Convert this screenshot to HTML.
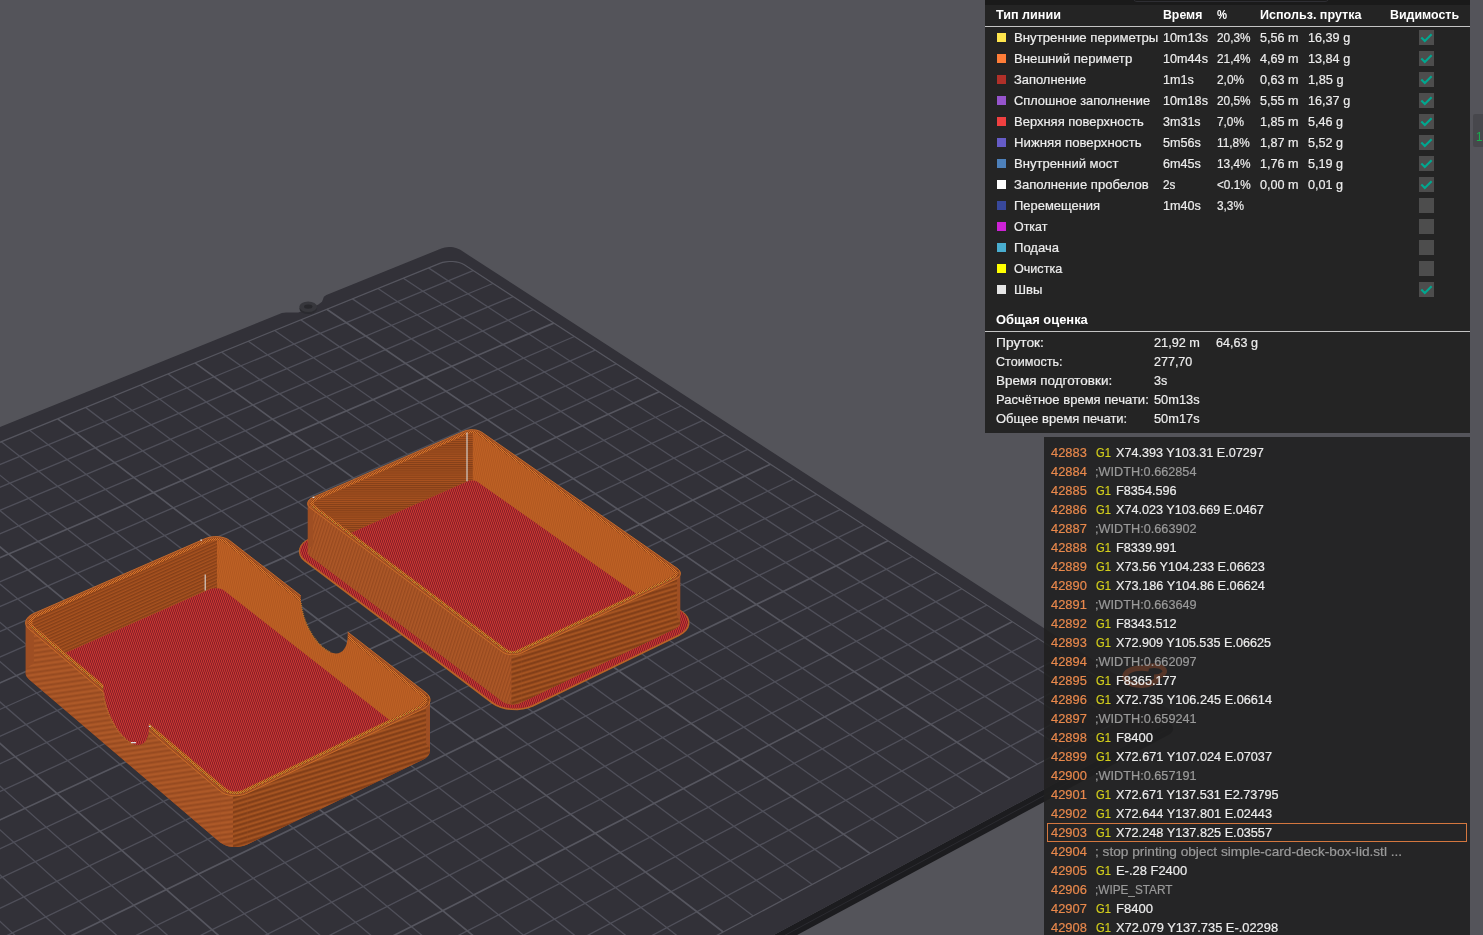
<!DOCTYPE html>
<html lang="ru"><head><meta charset="utf-8"><title>G-code preview</title>
<style>
html,body{margin:0;padding:0}
body{width:1483px;height:935px;overflow:hidden;position:relative;background:#54545a;font-family:"Liberation Sans",sans-serif}

.lg{position:absolute;left:985px;top:0;width:485px;height:433px;background:#242424;color:#ededed;font-size:13px;line-height:15px;white-space:nowrap}
.lg .tb{position:absolute;left:0;top:0;width:485px;height:5px;background:#1a1a1a}
.lg .tb i{position:absolute;left:147px;top:-10px;width:198px;height:12px;border:1px solid #2e2e33;border-radius:5px;box-sizing:border-box}
.lg b,.lg span{position:absolute;display:block;transform-origin:0 50%}
.lg span{-webkit-text-stroke:0.2px #ededed}
.lg b{font-weight:bold;color:#fff}
.lg .sep{position:absolute;left:0;width:485px;height:1px;background:#c4c4c4}
.lg .sw{position:absolute;left:11.8px;width:9.3px;height:9px}
.lg .cb{position:absolute;left:434px;width:15px;height:15px;background:#4d4d4d}
.lg .cb svg{position:absolute;left:0;top:0}
.gc{position:absolute;left:1044px;top:437px;width:426px;height:498px;background:rgba(32,32,32,0.9);color:#ececec;font-size:13px;line-height:15px;white-space:nowrap;overflow:hidden}
.gc span{position:absolute;display:block;transform-origin:0 50%;-webkit-text-stroke:0.2px currentColor}
.gc .n{color:#e8884c}
.gc .g{color:#d3cf1c}
.gc .c{color:#9a9a9a}
.gc .hl{position:absolute;left:3px;top:386px;width:418px;height:17px;border:1px solid #d4773f}
.sl{position:absolute;left:1473px;top:114px;width:12px;height:32.5px;background:#47474c;border-radius:2px}
.sl span{position:absolute;left:3.4px;top:17.4px;font-size:12.5px;line-height:12px;color:#17b34f;transform:scaleX(0.93);transform-origin:0 50%}

</style></head><body>
<svg width="1483" height="935" viewBox="0 0 1483 935" style="position:absolute;left:0;top:0;display:block">
<defs>
<pattern id="sAo" width="3" height="6" patternUnits="userSpaceOnUse" patternTransform="rotate(18)"><rect width="3" height="6" fill="#ae5827"/><rect width="1.4" height="6" fill="#984a20"/></pattern>
<pattern id="sAo1" width="10" height="4.8" patternUnits="userSpaceOnUse" patternTransform="rotate(-8)"><rect width="10" height="4.8" fill="#a45225"/><rect width="10" height="1.5" y="0.3" fill="#b05a28"/><rect width="10" height="1.5" y="2.7" fill="#964a20"/></pattern>
<pattern id="sBi1" width="8" height="3" patternUnits="userSpaceOnUse" patternTransform="rotate(-24)"><rect width="8" height="3" fill="#a9521f"/><rect width="8" height="1.5" fill="#843f19"/></pattern>
<pattern id="sAi" width="2" height="4" patternUnits="userSpaceOnUse" patternTransform="rotate(12)"><rect width="2" height="4" fill="#bf6125"/><rect width="1" height="4" fill="#b15820"/></pattern>
<pattern id="sBo" width="10" height="4.6" patternUnits="userSpaceOnUse" patternTransform="rotate(-17)"><rect width="10" height="4.6" fill="#93481d"/><rect width="10" height="1.5" y="0.3" fill="#a85521"/><rect width="10" height="1.5" y="2.6" fill="#7f3d17"/></pattern>
<pattern id="sBi" width="8" height="2.1" patternUnits="userSpaceOnUse"><rect width="8" height="2.1" fill="#a9521f"/><rect width="8" height="1.05" fill="#833f19"/></pattern>
<pattern id="sR" width="2" height="6" patternUnits="userSpaceOnUse"><rect width="2" height="6" fill="#a72b2d"/><rect width="1" height="2.4" fill="#8a2325"/><rect x="1" width="1" height="2.4" fill="#c63334"/><rect y="3" width="1" height="2.4" fill="#c63334"/><rect x="1" y="3" width="1" height="2.4" fill="#8a2325"/></pattern>
<pattern id="sRim" width="2" height="2" patternUnits="userSpaceOnUse"><rect width="2" height="2" fill="#dc7529"/><rect width="1" height="1" fill="#8a441b"/><rect x="1" y="1" width="1" height="1" fill="#9a4e1e"/></pattern>
</defs>
<path d="M1168.3 708.8 L1170 710 L1171.3 711.3 L1172.3 712.8 L1172.9 714.3 L1173.2 715.7 L1173.1 717.2 L1172.5 718.6 L1171.6 719.9 L1170.4 721.1 L1168.8 722.1 L241.2 1222 L238.7 1223.1 L236.1 1224 L233.3 1224.5 L230.4 1224.8 L227.6 1224.7 L224.8 1224.3 L222.1 1223.6 L219.7 1222.6 L217.6 1221.4 L215.7 1219.9 L-423.2 608.1 L-424.2 606.9 L-424.8 605.7 L-425.1 604.4 L-424.9 603 L-424.4 601.6 L-423.5 600.3 L-422.3 599 L-420.8 597.8 L-419 596.7 L-417 595.8 L-417 608.4 L-419 609.3 L-420.8 610.4 L-422.3 611.6 L-423.5 612.9 L-424.4 614.2 L-424.9 615.6 L-425.1 617 L-424.8 618.3 L-424.2 619.5 L-423.2 620.7 L215.7 1232.5 L217.6 1234 L219.7 1235.2 L222.1 1236.2 L224.8 1236.9 L227.6 1237.3 L230.4 1237.4 L233.3 1237.1 L236.1 1236.6 L238.7 1235.7 L241.2 1234.6 L1168.8 734.7 L1170.4 733.7 L1171.6 732.5 L1172.5 731.2 L1173.1 729.8 L1173.2 728.3 L1172.9 726.9 L1172.3 725.4 L1171.3 723.9 L1170 722.6 L1168.3 721.4Z" fill="#1c1c1f"/>
<path d="M1168.8 728.4 L241.2 1228.3" stroke="#2b2b30" stroke-width="1" fill="none"/>
<path d="M441.3 248.5 L443 248 L444.9 247.5 L446.9 247.2 L449 247.1 L451 247.1 L453.1 247.3 L455 247.7 L456.8 248.2 L458.4 248.9 L459.9 249.6 L1168.3 708.8 L1170 710 L1171.3 711.3 L1172.3 712.8 L1172.9 714.3 L1173.2 715.7 L1173.1 717.2 L1172.5 718.6 L1171.6 719.9 L1170.4 721.1 L1168.8 722.1 L241.2 1222 L238.7 1223.1 L236.1 1224 L233.3 1224.5 L230.4 1224.8 L227.6 1224.7 L224.8 1224.3 L222.1 1223.6 L219.7 1222.6 L217.6 1221.4 L215.7 1219.9 L-423.2 608.1 L-424.2 606.9 L-424.8 605.7 L-425.1 604.4 L-424.9 603 L-424.4 601.6 L-423.5 600.3 L-422.3 599 L-420.8 597.8 L-419 596.7 L-417 595.8 L281.9 313 L286.2 312.6 L298.4 312.5 L318 304.7 L322 301.8 L323.9 296.7 L326.4 295Z" fill="#323138"/>
<path d="M473.1 270.6L-372.5 617.3M428.5 267.9L1117.6 721.4M492.9 283.5L-354.9 633.9M403.4 278.2L1091.1 735.5M513 296.6L-337.1 650.7M378 288.5L1064.3 749.8M533.2 309.7L-319 667.7M352.5 298.9L1037.4 764.2M574.4 336.5L-282.4 702.4M300.8 319.9L982.7 793.4M595.2 350.1L-263.7 720M274.7 330.5L954.9 808.3M616.3 363.9L-244.8 737.8M248.3 341.2L926.9 823.2M637.7 377.8L-225.7 755.9M221.7 352.1L898.6 838.3M681 406L-186.8 792.6M168 373.9L841.3 868.9M703 420.3L-167 811.3M140.7 385L812.2 884.5M725.3 434.8L-147 830.3M113.3 396.2L782.8 900.2M747.7 449.4L-126.7 849.5M85.6 407.4L753.2 916M793.5 479.2L-85.3 888.5M29.6 430.2L693 948.1M816.7 494.3L-64.2 908.5M1.3 441.7L662.4 964.4M840.2 509.6L-42.9 928.6M-27.3 453.4L631.6 980.9M863.9 525.1L-21.2 949M-56.1 465.1L600.4 997.5M912.3 556.6L22.8 990.7M-114.5 488.8L537.2 1031.3M936.8 572.6L45.3 1011.9M-144.1 500.9L505.1 1048.5M961.7 588.8L68 1033.4M-173.9 513L472.7 1065.8M986.8 605.1L91.1 1055.2M-204 525.2L439.9 1083.3M1037.9 638.4L138.1 1099.6M-264.9 550L373.4 1118.8M1063.9 655.4L162.1 1122.3M-295.7 562.5L339.6 1136.8M1090.2 672.5L186.4 1145.2M-326.8 575.2L305.4 1155.1M1116.9 689.8L211.1 1168.5M-358.2 588L270.9 1173.5" stroke="#4f4f59" stroke-width="1.35" fill="none"/>
<path d="M553.7 323.1L-300.8 685M326.8 309.3L1010.1 778.8M659.2 391.8L-206.4 774.1M195 362.9L870.1 853.5M770.5 464.2L-106.1 868.9M57.8 418.8L723.2 932M888 540.8L0.6 969.7M-85.2 476.9L569 1014.4M1012.2 621.7L114.5 1077.2M-234.3 537.5L406.8 1100.9" stroke="#56565f" stroke-width="1.7" fill="none"/>
<path d="M439.8 263.4 L442.7 262.4 L445.8 261.8 L449.2 261.5 L452.6 261.5 L456 261.9 L459.1 262.5 L461.9 263.5 L464.3 264.8 L1129 697.7 L1131.6 699.7 L1133.5 702 L1134.8 704.4 L1135.2 706.8 L1134.9 709.2 L1133.8 711.4 L1131.9 713.4 L1129.4 715.1 L255.3 1181.8 L251.3 1183.6 L246.9 1184.8 L242.3 1185.3 L237.7 1185.3 L233.2 1184.6 L229 1183.3 L225.4 1181.4 L222.3 1179.1 L-380.3 609.8 L-381.9 607.9 L-382.7 605.8 L-382.7 603.6 L-382 601.4 L-380.5 599.2 L-378.4 597.1 L-375.6 595.3 L-372.4 593.7Z" stroke="#56565f" stroke-width="1.2" fill="none"/>
<ellipse cx="308.2" cy="308.8" rx="8.8" ry="5.2" fill="#2b2b30"/>
<ellipse cx="308.2" cy="306.8" rx="8.8" ry="5.2" fill="#37373c"/>
<ellipse cx="308.2" cy="306.6" rx="4.2" ry="2.2" fill="#28282c"/>
<path d="M298.9 551.7 L299.2 548.6 L300.5 545.5 L302.9 542.6 L306.2 540 L310.2 537.8 L453.1 474.9 L457.6 473.3 L462.6 472.2 L467.9 471.7 L473.2 471.7 L478.5 472.4 L483.4 473.6 L487.9 475.3 L491.6 477.4 L682.4 611.2 L685.7 614 L688 617 L689.2 620.3 L689.4 623.6 L689.4 624.5 L688.4 627.8 L686.4 630.8 L683.3 633.6 L679.4 635.9 L533.4 706.4 L528.6 708.3 L523.2 709.5 L517.4 710.2 L511.6 710.1 L505.9 709.4 L500.5 708 L495.7 705.9 L491.6 703.4 L304.4 561.4 L301.5 558.7 L299.7 555.7 L298.9 552.6Z" fill="#b86226"/>
<path d="M453.8 475.4 L458.1 473.9 L462.9 472.8 L468 472.3 L473.1 472.4 L478.1 473 L482.9 474.1 L487.1 475.8 L490.7 477.8 L681.5 611.6 L684.6 614.3 L686.8 617.2 L688 620.4 L688.1 623.5 L687.2 626.7 L685.3 629.6 L682.3 632.2 L678.6 634.4 L532.6 704.9 L528 706.7 L522.8 707.9 L517.3 708.5 L511.7 708.4 L506.3 707.7 L501.1 706.4 L496.5 704.5 L492.7 702 L305.4 560 L302.6 557.5 L300.9 554.7 L300.1 551.7 L300.4 548.7 L301.7 545.7 L303.9 542.9 L307.1 540.5 L311 538.4Z" fill="url(#sR)"/>
<path d="M307.7 503.8 L307.8 502.4 L308.4 501 L309.5 499.6 L311 498.4 L312.9 497.4 L464.1 431.2 L466.2 430.5 L468.5 430 L471 429.7 L473.5 429.8 L475.9 430 L478.2 430.6 L480.2 431.4 L482 432.4 L677.1 568.3 L678.6 569.6 L679.7 571 L680.3 572.5 L680.3 574 L680.3 623.1 L679.9 624.6 L678.9 626.1 L677.5 627.3 L675.7 628.4 L521.4 702.6 L519.1 703.5 L516.6 704.1 L514 704.4 L511.3 704.4 L508.7 704 L506.2 703.4 L504 702.5 L502.1 701.3 L310.2 556.2 L308.9 555 L308 553.6 L307.7 552.2Z" fill="#9e4e23"/>
<path d="M312.9 497.4 L310.5 498.8 L308.7 500.5 L307.8 502.4 L307.7 504.3 L308.6 506.2 L310.2 507.8 L502.1 651.7 L502.1 701.3 L310.2 556.2 L308.6 554.6 L307.7 552.7 L307.8 550.7 L308.7 548.8 L310.5 547.1 L312.9 545.8Z" fill="url(#sAo)"/>
<path d="M677.1 568.3 L679 570 L680.1 572 L680.3 574 L679.6 576 L678.1 577.8 L675.7 579.3 L521.4 653 L521.4 702.6 L675.7 628.4 L678.1 626.9 L679.6 625.1 L680.3 623.1 L680.1 621.1 L679 619.1 L677.1 617.4Z" fill="url(#sBo)"/>
<path d="M521.4 653 L518.3 654.2 L514.9 654.7 L511.3 654.8 L511.3 704.4 L514.9 704.3 L518.3 703.7 L521.4 702.6Z" fill="url(#sBo)"/>
<path d="M511.3 654.8 L507.8 654.2 L504.7 653.2 L502.1 651.7 L502.1 701.3 L504.7 702.8 L507.8 703.8 L511.3 704.4Z" fill="url(#sAo)"/>
<clipPath id="c_b2"><path d="M467.7 433.8 L468.9 433.4 L470.1 433.1 L471.4 432.9 L472.8 433 L474.1 433.1 L475.3 433.4 L476.4 433.8 L477.4 434.4 L672.5 570.5 L673.3 571.2 L673.9 572 L674.2 572.8 L674.2 573.6 L674 574.4 L673.4 575.2 L672.7 575.9 L671.7 576.4 L517.4 650.1 L516.2 650.6 L514.9 650.9 L513.4 651 L512 651 L510.5 650.8 L509.2 650.5 L508 650 L507 649.4 L315 505.7 L314.3 505.1 L313.9 504.3 L313.6 503.6 L313.7 502.8 L314.1 502 L314.6 501.3 L315.5 500.6 L316.5 500.1Z"/></clipPath>
<g clip-path="url(#c_b2)">
<path d="M467.7 433.8 L468.9 433.4 L470.1 433.1 L471.4 432.9 L472.8 433 L474.1 433.1 L475.3 433.4 L476.4 433.8 L477.4 434.4 L672.5 570.5 L673.3 571.2 L673.9 572 L674.2 572.8 L674.2 573.6 L674 574.4 L673.4 575.2 L672.7 575.9 L671.7 576.4 L517.4 650.1 L516.2 650.6 L514.9 650.9 L513.4 651 L512 651 L510.5 650.8 L509.2 650.5 L508 650 L507 649.4 L315 505.7 L314.3 505.1 L313.9 504.3 L313.6 503.6 L313.7 502.8 L314.1 502 L314.6 501.3 L315.5 500.6 L316.5 500.1Z" fill="url(#sAi)"/>
<path d="M472.8 433 L467.7 433.8 L306 504.7 L306 552.8 L467.7 481.2 L472.8 480.4Z" fill="url(#sBi)"/>
<path d="M467.7 481.2 L468.9 480.8 L470.1 480.5 L471.4 480.4 L472.8 480.4 L474.1 480.6 L475.3 480.9 L476.4 481.3 L477.4 481.8 L672.5 619.3 L673.3 620 L673.9 620.8 L674.2 621.6 L674.2 622.4 L674 623.2 L673.4 624 L672.7 624.7 L671.7 625.3 L517.4 699.4 L516.2 699.8 L514.9 700.2 L513.4 700.3 L512 700.3 L510.5 700.1 L509.2 699.8 L508 699.3 L507 698.6 L315 553.8 L314.3 553.1 L313.9 552.4 L313.6 551.6 L313.7 550.8 L314.1 550.1 L314.6 549.3 L315.5 548.7 L316.5 548.1Z" fill="url(#sR)"/>
</g>
<path d="M465.6 432.3 L467.3 431.7 L469.2 431.3 L471.2 431.1 L473.2 431.1 L475.2 431.3 L477 431.8 L478.7 432.4 L480.1 433.2 L675.2 569.2 L676.4 570.3 L677.3 571.4 L677.8 572.6 L677.8 573.9 L677.4 575.1 L676.7 576.2 L675.5 577.2 L674.1 578.1 L519.7 651.8 L517.9 652.5 L515.9 653 L513.8 653.2 L511.6 653.2 L509.4 652.9 L507.4 652.4 L505.6 651.7 L504.1 650.7 L312.2 507 L311.1 506 L310.4 504.9 L310.1 503.7 L310.2 502.5 L310.7 501.4 L311.6 500.3 L312.9 499.4 L314.4 498.5Z M467.7 433.8 L468.9 433.4 L470.1 433.1 L471.4 432.9 L472.8 433 L474.1 433.1 L475.3 433.4 L476.4 433.8 L477.4 434.4 L672.5 570.5 L673.3 571.2 L673.9 572 L674.2 572.8 L674.2 573.6 L674 574.4 L673.4 575.2 L672.7 575.9 L671.7 576.4 L517.4 650.1 L516.2 650.6 L514.9 650.9 L513.4 651 L512 651 L510.5 650.8 L509.2 650.5 L508 650 L507 649.4 L315 505.7 L314.3 505.1 L313.9 504.3 L313.6 503.6 L313.7 502.8 L314.1 502 L314.6 501.3 L315.5 500.6 L316.5 500.1Z" fill="url(#sRim)" fill-rule="evenodd"/>
<path d="M464.1 431.2 L466.2 430.5 L468.5 430 L471 429.7 L473.5 429.8 L475.9 430 L478.2 430.6 L480.2 431.4 L482 432.4 L677.1 568.3 L678.6 569.6 L679.7 571 L680.3 572.5 L680.3 574 L679.9 575.5 L678.9 576.9 L677.5 578.2 L675.7 579.3 L521.4 653 L519.1 653.9 L516.6 654.5 L514 654.8 L511.3 654.8 L508.7 654.4 L506.2 653.8 L504 652.9 L502.1 651.7 L310.2 507.8 L308.9 506.6 L308 505.3 L307.7 503.8 L307.8 502.4 L308.4 501 L309.5 499.6 L311 498.4 L312.9 497.4Z" fill="none" stroke="#cf6f2a" stroke-width="0.9"/>
<path d="M313.1 506.6 L505 650.3 L506.9 651.4 L509.2 652.1 L511.7 652.5 L514.3 652.5 L516.8 652.1 L519 651.3 L673.3 577.6" fill="none" stroke="#a4902f" stroke-width="1.1" stroke-dasharray="1.2 2.2"/>
<mask id="m_b1" maskUnits="userSpaceOnUse" x="0" y="0" width="1483" height="935"><rect width="1483" height="935" fill="#fff"/><path d="M300.8 591.9 L300.8 598.9 L301 603.2 L301.6 607.7 L302.6 612.3 L303.9 617 L305.6 621.8 L307.6 626.4 L309.9 630.9 L312.4 635.2 L315.1 639.1 L318 642.7 L321 645.8 L324.1 648.5 L327.1 650.6 L330.2 652.2 L333.1 653.1 L335.8 653.4 L338.4 653.2 L340.7 652.2 L342.8 650.7 L344.5 648.6 L345.9 646 L346.9 642.9 L347.5 639.3 L347.7 635.3 L347.7 628.3Z" fill="#000"/></mask>
<g mask="url(#m_b1)">
<path d="M25.6 622.8 L26 620.6 L27.1 618.6 L28.8 616.6 L31.1 614.9 L33.9 613.4 L204.8 538.8 L207.8 537.7 L211.1 537 L214.6 536.6 L218.1 536.7 L221.4 537.1 L224.6 537.9 L227.3 539 L229.6 540.5 L426.1 692.9 L428.1 694.8 L429.4 696.9 L430 699.1 L430 749.7 L429.9 752 L429.1 754.2 L427.6 756.3 L425.5 758.2 L422.8 759.7 L247.3 844.4 L244.1 845.7 L240.4 846.6 L236.7 847 L232.9 847 L229.2 846.4 L225.8 845.5 L222.8 844.1 L220.2 842.4 L28.6 679 L27 677.1 L25.9 675.1 L25.6 673Z" fill="#9e4e23"/>
<path d="M33.9 613.4 L30.3 615.4 L27.6 617.9 L26 620.6 L25.7 623.5 L26.6 626.2 L28.7 628.7 L220.3 791.2 L220.3 842.4 L28.7 679 L26.6 676.5 L25.7 673.7 L26 670.9 L27.6 668.1 L30.3 665.6 L33.9 663.6Z" fill="url(#sAo1)"/>
<path d="M426.1 692.9 L428.6 695.5 L429.9 698.4 L429.9 701.4 L428.7 704.3 L426.3 706.9 L422.8 709.1 L247.3 793.2 L247.3 844.4 L422.8 759.7 L426.3 757.6 L428.7 754.9 L429.9 752 L429.9 749 L428.6 746.1 L426.1 743.5Z" fill="url(#sBo)"/>
<path d="M247.3 793.2 L242.9 794.8 L237.9 795.7 L232.9 795.7 L232.9 847 L237.9 846.9 L242.9 846 L247.3 844.4Z" fill="url(#sBo)"/>
<path d="M232.9 795.7 L228 794.9 L223.7 793.4 L220.3 791.2 L220.3 842.4 L223.7 844.6 L228 846.2 L232.9 847Z" fill="url(#sAo1)"/>
<clipPath id="c_b1"><path d="M208.5 541.7 L210.4 541 L212.5 540.5 L214.8 540.3 L217 540.3 L219.2 540.6 L221.2 541.1 L222.9 541.9 L224.4 542.8 L420.8 695.5 L422 696.7 L422.9 698 L423.3 699.4 L423.2 700.9 L422.7 702.3 L421.7 703.6 L420.3 704.8 L418.6 705.8 L243.3 789.7 L241.2 790.6 L238.9 791.1 L236.4 791.4 L234 791.4 L231.7 791 L229.5 790.4 L227.5 789.6 L225.9 788.5 L34.2 626.2 L33.1 625.1 L32.5 623.8 L32.3 622.5 L32.5 621.1 L33.2 619.8 L34.3 618.5 L35.8 617.4 L37.5 616.5Z"/></clipPath>
<g clip-path="url(#c_b1)">
<path d="M208.5 541.7 L210.4 541 L212.5 540.5 L214.8 540.3 L217 540.3 L219.2 540.6 L221.2 541.1 L222.9 541.9 L224.4 542.8 L420.8 695.5 L422 696.7 L422.9 698 L423.3 699.4 L423.2 700.9 L422.7 702.3 L421.7 703.6 L420.3 704.8 L418.6 705.8 L243.3 789.7 L241.2 790.6 L238.9 791.1 L236.4 791.4 L234 791.4 L231.7 791 L229.5 790.4 L227.5 789.6 L225.9 788.5 L34.2 626.2 L33.1 625.1 L32.5 623.8 L32.3 622.5 L32.5 621.1 L33.2 619.8 L34.3 618.5 L35.8 617.4 L37.5 616.5Z" fill="url(#sAi)"/>
<path d="M217 540.3 L208.5 541.7 L22.2 623.2 L22.2 672 L208.5 589.7 L217 588.3Z" fill="url(#sBi1)"/>
<path d="M208.5 589.7 L210.4 589 L212.5 588.5 L214.8 588.3 L217 588.3 L219.2 588.6 L221.2 589.1 L222.9 589.8 L224.4 590.8 L420.8 744.6 L422 745.8 L422.9 747.2 L423.3 748.6 L423.2 750 L422.7 751.4 L421.7 752.8 L420.3 754 L418.6 755 L243.3 839.4 L241.2 840.3 L238.9 840.8 L236.4 841.1 L234 841.1 L231.7 840.7 L229.5 840.1 L227.5 839.2 L225.9 838.1 L34.2 675 L33.1 673.9 L32.5 672.6 L32.3 671.2 L32.5 669.9 L33.2 668.5 L34.3 667.3 L35.8 666.1 L37.5 665.2Z" fill="url(#sR)"/>
</g>
<path d="M206.2 539.9 L208.8 539 L211.7 538.4 L214.6 538 L217.6 538.1 L220.5 538.5 L223.2 539.1 L225.6 540.1 L227.6 541.4 L424 693.9 L425.7 695.5 L426.9 697.3 L427.4 699.2 L427.3 701.2 L426.6 703.1 L425.3 704.9 L423.5 706.4 L421.2 707.8 L245.8 791.9 L242.9 793 L239.8 793.7 L236.6 794.1 L233.3 794 L230.1 793.6 L227.2 792.8 L224.6 791.6 L222.5 790.1 L30.8 627.7 L29.4 626.2 L28.5 624.5 L28.2 622.7 L28.5 620.8 L29.5 619 L30.9 617.4 L32.9 615.9 L35.3 614.6Z M208.5 541.7 L210.4 541 L212.5 540.5 L214.8 540.3 L217 540.3 L219.2 540.6 L221.2 541.1 L222.9 541.9 L224.4 542.8 L420.8 695.5 L422 696.7 L422.9 698 L423.3 699.4 L423.2 700.9 L422.7 702.3 L421.7 703.6 L420.3 704.8 L418.6 705.8 L243.3 789.7 L241.2 790.6 L238.9 791.1 L236.4 791.4 L234 791.4 L231.7 791 L229.5 790.4 L227.5 789.6 L225.9 788.5 L34.2 626.2 L33.1 625.1 L32.5 623.8 L32.3 622.5 L32.5 621.1 L33.2 619.8 L34.3 618.5 L35.8 617.4 L37.5 616.5Z" fill="url(#sRim)" fill-rule="evenodd"/>
<path d="M204.7 538.8 L207.8 537.7 L211.1 537 L214.6 536.6 L218.1 536.7 L221.4 537.1 L224.6 537.9 L227.3 539 L229.6 540.5 L426.1 692.9 L428.1 694.8 L429.4 696.9 L430 699.1 L429.9 701.4 L429.1 703.6 L427.6 705.6 L425.5 707.5 L422.8 709.1 L247.3 793.2 L244.1 794.5 L240.4 795.4 L236.7 795.8 L232.9 795.7 L229.2 795.2 L225.8 794.3 L222.8 792.9 L220.3 791.2 L28.7 628.7 L27 626.9 L26 624.9 L25.6 622.8 L26 620.6 L27.1 618.6 L28.8 616.6 L31.1 614.9 L33.9 613.4Z" fill="none" stroke="#cf6f2a" stroke-width="0.9"/>
<path d="M32 627.2 L223.7 789.5 L226.4 791.3 L229.7 792.5 L233.6 793.1 L237.5 793.1 L241.4 792.4 L244.9 791.1 L420.3 707.1" fill="none" stroke="#a4902f" stroke-width="1.1" stroke-dasharray="1.2 2.2"/>
</g>
<path d="M301 603.2 L301.6 607.7 L302.6 612.3 L303.9 617 L305.6 621.8 L307.6 626.4 L309.9 630.9 L312.4 635.2 L315.1 639.1 L318 642.7 L321 645.8 L324.1 648.5 L327.1 650.6 L330.2 652.2" stroke="#b5702a" stroke-width="1.6" fill="none" stroke-dasharray="1 1"/>
<path d="M103.3 681.4 L103.3 688.4 L103.5 692.7 L104.1 697.3 L105.1 702 L106.4 706.9 L108 711.7 L110 716.5 L112.2 721.2 L114.7 725.6 L117.3 729.7 L120.2 733.4 L123.1 736.7 L126.1 739.5 L129.1 741.8 L132 743.5 L134.8 744.6 L137.5 745 L140 744.8 L142.3 744 L144.3 742.5 L146 740.5 L147.3 737.8 L148.3 734.7 L148.9 731.1 L149.1 727.1 L149.1 720.1Z" fill="url(#sR)"/>
<path d="M103.5 692.7 L104.1 697.3 L105.1 702 L106.4 706.9 L108 711.7 L110 716.5 L112.2 721.2 L114.7 725.6 L117.3 729.7 L120.2 733.4 L123.1 736.7 L126.1 739.5 L129.1 741.8 L132 743.5" stroke="#b5702a" stroke-width="1.6" fill="none" stroke-dasharray="1 1"/>
<path d="M467 432.5V481.2" stroke="#d8d8d8" stroke-width="1.1"/>
<path d="M205.2 574.5V590.6" stroke="#d8d8d8" stroke-width="1.1"/>
<path d="M312.6 497.3h1.8M200.4 540.2h1.6M148.8 726.3h1.8M131 742.6h5" stroke="#dcdcdc" stroke-width="1.2"/>
</svg>
<div class="lg"><div class="tb"><i></i></div>
<b style="left:11.4px;top:7.0px;transform:scaleX(0.9701)">Тип линии</b>
<b style="left:178.2px;top:7.0px;transform:scaleX(0.9452)">Время</b>
<b style="left:232.2px;top:7.0px;transform:scaleX(0.8667)">%</b>
<b style="left:275.2px;top:7.0px;transform:scaleX(0.9660)">Использ. прутка</b>
<b style="left:404.6px;top:7.0px;transform:scaleX(0.9528)">Видимость</b>
<div class="sep" style="top:26px"></div>
<div class="sw" style="top:33.1px;background:#ffe64d"></div>
<span style="left:28.9px;top:29.8px;transform:scaleX(1.0148)">Внутренние периметры</span>
<span style="left:178.2px;top:29.8px;transform:scaleX(0.9761)">10m13s</span>
<span style="left:232.4px;top:29.8px;transform:scaleX(0.9079)">20,3%</span>
<span style="left:275.2px;top:29.8px;transform:scaleX(0.9700)">5,56 m</span>
<span style="left:323.4px;top:29.8px;transform:scaleX(0.9721)">16,39 g</span>
<div class="cb" style="top:30px"><svg width="15" height="15" viewBox="0 0 15 15"><path d="M2.3 7.6 L5.8 11.1 L12.6 4.3" stroke="#00a890" stroke-width="2.1" fill="none"/></svg></div>
<div class="sw" style="top:54.1px;background:#ff7d38"></div>
<span style="left:28.9px;top:50.8px;transform:scaleX(1.0147)">Внешний периметр</span>
<span style="left:178.2px;top:50.8px;transform:scaleX(0.9720)">10m44s</span>
<span style="left:232.4px;top:50.8px;transform:scaleX(0.9100)">21,4%</span>
<span style="left:275.2px;top:50.8px;transform:scaleX(0.9720)">4,69 m</span>
<span style="left:323.4px;top:50.8px;transform:scaleX(0.9720)">13,84 g</span>
<div class="cb" style="top:51px"><svg width="15" height="15" viewBox="0 0 15 15"><path d="M2.3 7.6 L5.8 11.1 L12.6 4.3" stroke="#00a890" stroke-width="2.1" fill="none"/></svg></div>
<div class="sw" style="top:75.1px;background:#b03029"></div>
<span style="left:28.9px;top:71.8px;transform:scaleX(0.9932)">Заполнение</span>
<span style="left:178.2px;top:71.8px;transform:scaleX(0.9677)">1m1s</span>
<span style="left:232.4px;top:71.8px;transform:scaleX(0.9133)">2,0%</span>
<span style="left:275.2px;top:71.8px;transform:scaleX(0.9720)">0,63 m</span>
<span style="left:323.4px;top:71.8px;transform:scaleX(0.9829)">1,85 g</span>
<div class="cb" style="top:72px"><svg width="15" height="15" viewBox="0 0 15 15"><path d="M2.3 7.6 L5.8 11.1 L12.6 4.3" stroke="#00a890" stroke-width="2.1" fill="none"/></svg></div>
<div class="sw" style="top:96.1px;background:#9654cc"></div>
<span style="left:28.9px;top:92.8px;transform:scaleX(0.9863)">Сплошное заполнение</span>
<span style="left:178.2px;top:92.8px;transform:scaleX(0.9720)">10m18s</span>
<span style="left:232.4px;top:92.8px;transform:scaleX(0.9100)">20,5%</span>
<span style="left:275.2px;top:92.8px;transform:scaleX(0.9720)">5,55 m</span>
<span style="left:323.4px;top:92.8px;transform:scaleX(0.9720)">16,37 g</span>
<div class="cb" style="top:93px"><svg width="15" height="15" viewBox="0 0 15 15"><path d="M2.3 7.6 L5.8 11.1 L12.6 4.3" stroke="#00a890" stroke-width="2.1" fill="none"/></svg></div>
<div class="sw" style="top:117.1px;background:#f04040"></div>
<span style="left:28.9px;top:113.8px;transform:scaleX(0.9985)">Верхняя поверхность</span>
<span style="left:178.2px;top:113.8px;transform:scaleX(0.9641)">3m31s</span>
<span style="left:232.4px;top:113.8px;transform:scaleX(0.9100)">7,0%</span>
<span style="left:275.2px;top:113.8px;transform:scaleX(0.9720)">1,85 m</span>
<span style="left:323.4px;top:113.8px;transform:scaleX(0.9720)">5,46 g</span>
<div class="cb" style="top:114px"><svg width="15" height="15" viewBox="0 0 15 15"><path d="M2.3 7.6 L5.8 11.1 L12.6 4.3" stroke="#00a890" stroke-width="2.1" fill="none"/></svg></div>
<div class="sw" style="top:138.1px;background:#665cc7"></div>
<span style="left:28.9px;top:134.8px;transform:scaleX(1.0152)">Нижняя поверхность</span>
<span style="left:178.2px;top:134.8px;transform:scaleX(0.9720)">5m56s</span>
<span style="left:232.4px;top:134.8px;transform:scaleX(0.9100)">11,8%</span>
<span style="left:275.2px;top:134.8px;transform:scaleX(0.9720)">1,87 m</span>
<span style="left:323.4px;top:134.8px;transform:scaleX(0.9720)">5,52 g</span>
<div class="cb" style="top:135px"><svg width="15" height="15" viewBox="0 0 15 15"><path d="M2.3 7.6 L5.8 11.1 L12.6 4.3" stroke="#00a890" stroke-width="2.1" fill="none"/></svg></div>
<div class="sw" style="top:159.1px;background:#4d80ba"></div>
<span style="left:28.9px;top:155.8px;transform:scaleX(1.0048)">Внутренний мост</span>
<span style="left:178.2px;top:155.8px;transform:scaleX(0.9720)">6m45s</span>
<span style="left:232.4px;top:155.8px;transform:scaleX(0.9100)">13,4%</span>
<span style="left:275.2px;top:155.8px;transform:scaleX(0.9720)">1,76 m</span>
<span style="left:323.4px;top:155.8px;transform:scaleX(0.9720)">5,19 g</span>
<div class="cb" style="top:156px"><svg width="15" height="15" viewBox="0 0 15 15"><path d="M2.3 7.6 L5.8 11.1 L12.6 4.3" stroke="#00a890" stroke-width="2.1" fill="none"/></svg></div>
<div class="sw" style="top:180.1px;background:#ffffff"></div>
<span style="left:28.9px;top:176.8px;transform:scaleX(1.0060)">Заполнение пробелов</span>
<span style="left:178.2px;top:176.8px;transform:scaleX(0.9000)">2s</span>
<span style="left:232.4px;top:176.8px;transform:scaleX(0.9053)">&lt;0.1%</span>
<span style="left:275.2px;top:176.8px;transform:scaleX(0.9720)">0,00 m</span>
<span style="left:323.4px;top:176.8px;transform:scaleX(0.9720)">0,01 g</span>
<div class="cb" style="top:177px"><svg width="15" height="15" viewBox="0 0 15 15"><path d="M2.3 7.6 L5.8 11.1 L12.6 4.3" stroke="#00a890" stroke-width="2.1" fill="none"/></svg></div>
<div class="sw" style="top:201.1px;background:#38489b"></div>
<span style="left:28.9px;top:197.8px;transform:scaleX(0.9953)">Перемещения</span>
<span style="left:178.2px;top:197.8px;transform:scaleX(0.9720)">1m40s</span>
<span style="left:232.4px;top:197.8px;transform:scaleX(0.9100)">3,3%</span>
<div class="cb" style="top:198px"></div>
<div class="sw" style="top:222.1px;background:#cd22d6"></div>
<span style="left:28.9px;top:218.8px;transform:scaleX(0.9556)">Откат</span>
<div class="cb" style="top:219px"></div>
<div class="sw" style="top:243.1px;background:#49adcf"></div>
<span style="left:28.9px;top:239.8px;transform:scaleX(1.0044)">Подача</span>
<div class="cb" style="top:240px"></div>
<div class="sw" style="top:264.1px;background:#ffff00"></div>
<span style="left:28.9px;top:260.8px;transform:scaleX(0.9667)">Очистка</span>
<div class="cb" style="top:261px"></div>
<div class="sw" style="top:285.1px;background:#e6e6e6"></div>
<span style="left:28.9px;top:281.8px;transform:scaleX(1.0107)">Швы</span>
<div class="cb" style="top:282px"><svg width="15" height="15" viewBox="0 0 15 15"><path d="M2.3 7.6 L5.8 11.1 L12.6 4.3" stroke="#00a890" stroke-width="2.1" fill="none"/></svg></div>
<b style="left:11.4px;top:311.7px;transform:scaleX(0.9926)">Общая оценка</b>
<div class="sep" style="top:331px"></div>
<span style="left:11.4px;top:335.2px;transform:scaleX(1.0591)">Пруток:</span>
<span style="left:169.4px;top:335.2px;transform:scaleX(0.9787)">21,92 m</span>
<span style="left:231.4px;top:335.2px;transform:scaleX(0.9659)">64,63 g</span>
<span style="left:11.4px;top:354.2px;transform:scaleX(0.9681)">Стоимость:</span>
<span style="left:169.4px;top:354.2px;transform:scaleX(0.9625)">277,70</span>
<span style="left:11.4px;top:373.2px;transform:scaleX(1.0351)">Время подготовки:</span>
<span style="left:169.4px;top:373.2px;transform:scaleX(0.9692)">3s</span>
<span style="left:11.4px;top:392.2px;transform:scaleX(1.0026)">Расчётное время печати:</span>
<span style="left:169.4px;top:392.2px;transform:scaleX(0.9848)">50m13s</span>
<span style="left:11.4px;top:411.2px;transform:scaleX(0.9977)">Общее время печати:</span>
<span style="left:169.4px;top:411.2px;transform:scaleX(0.9848)">50m17s</span>
</div>
<div class="gc"><svg width="60" height="40" viewBox="1120 655 60 40" style="position:absolute;left:76px;top:218px;opacity:.3"><path d="M1158 676.5a16.5 8.6 0 1 1-9-7.6" stroke="#c85a2c" stroke-width="5.5" fill="none"/><path d="M1144.5 668.2a11 5.6 0 1 1 9.5 8.6" stroke="#c85a2c" stroke-width="4.6" fill="none"/></svg><div class="hl"></div>
<span class="n" style="left:7.3px;top:8.2px;transform:scaleX(0.9900)">42883</span>
<span class="g" style="left:51.6px;top:8.2px;transform:scaleX(0.8588)">G1</span>
<span style="left:72.4px;top:8.2px;transform:scaleX(0.9706)">X74.393 Y103.31 E.07297</span>
<span class="n" style="left:7.3px;top:27.2px;transform:scaleX(0.9900)">42884</span>
<span class="c" style="left:51.2px;top:27.2px;transform:scaleX(0.9750)">;WIDTH:0.662854</span>
<span class="n" style="left:7.3px;top:46.2px;transform:scaleX(0.9900)">42885</span>
<span class="g" style="left:51.6px;top:46.2px;transform:scaleX(0.8588)">G1</span>
<span style="left:72.4px;top:46.2px;transform:scaleX(0.9758)">F8354.596</span>
<span class="n" style="left:7.3px;top:65.2px;transform:scaleX(0.9900)">42886</span>
<span class="g" style="left:51.6px;top:65.2px;transform:scaleX(0.8588)">G1</span>
<span style="left:72.4px;top:65.2px;transform:scaleX(0.9706)">X74.023 Y103.669 E.0467</span>
<span class="n" style="left:7.3px;top:84.2px;transform:scaleX(0.9900)">42887</span>
<span class="c" style="left:51.2px;top:84.2px;transform:scaleX(0.9770)">;WIDTH:0.663902</span>
<span class="n" style="left:7.3px;top:103.2px;transform:scaleX(0.9900)">42888</span>
<span class="g" style="left:51.6px;top:103.2px;transform:scaleX(0.8588)">G1</span>
<span style="left:72.4px;top:103.2px;transform:scaleX(0.9760)">F8339.991</span>
<span class="n" style="left:7.3px;top:122.2px;transform:scaleX(0.9900)">42889</span>
<span class="g" style="left:51.6px;top:122.2px;transform:scaleX(0.8588)">G1</span>
<span style="left:72.4px;top:122.2px;transform:scaleX(0.9780)">X73.56 Y104.233 E.06623</span>
<span class="n" style="left:7.3px;top:141.2px;transform:scaleX(0.9900)">42890</span>
<span class="g" style="left:51.6px;top:141.2px;transform:scaleX(0.8588)">G1</span>
<span style="left:72.4px;top:141.2px;transform:scaleX(0.9780)">X73.186 Y104.86 E.06624</span>
<span class="n" style="left:7.3px;top:160.2px;transform:scaleX(0.9900)">42891</span>
<span class="c" style="left:51.2px;top:160.2px;transform:scaleX(0.9770)">;WIDTH:0.663649</span>
<span class="n" style="left:7.3px;top:179.2px;transform:scaleX(0.9900)">42892</span>
<span class="g" style="left:51.6px;top:179.2px;transform:scaleX(0.8588)">G1</span>
<span style="left:72.4px;top:179.2px;transform:scaleX(0.9760)">F8343.512</span>
<span class="n" style="left:7.3px;top:198.2px;transform:scaleX(0.9900)">42893</span>
<span class="g" style="left:51.6px;top:198.2px;transform:scaleX(0.8588)">G1</span>
<span style="left:72.4px;top:198.2px;transform:scaleX(0.9719)">X72.909 Y105.535 E.06625</span>
<span class="n" style="left:7.3px;top:217.2px;transform:scaleX(0.9900)">42894</span>
<span class="c" style="left:51.2px;top:217.2px;transform:scaleX(0.9770)">;WIDTH:0.662097</span>
<span class="n" style="left:7.3px;top:236.2px;transform:scaleX(0.9900)">42895</span>
<span class="g" style="left:51.6px;top:236.2px;transform:scaleX(0.8588)">G1</span>
<span style="left:72.4px;top:236.2px;transform:scaleX(0.9760)">F8365.177</span>
<span class="n" style="left:7.3px;top:255.2px;transform:scaleX(0.9900)">42896</span>
<span class="g" style="left:51.6px;top:255.2px;transform:scaleX(0.8588)">G1</span>
<span style="left:72.4px;top:255.2px;transform:scaleX(0.9780)">X72.735 Y106.245 E.06614</span>
<span class="n" style="left:7.3px;top:274.2px;transform:scaleX(0.9900)">42897</span>
<span class="c" style="left:51.2px;top:274.2px;transform:scaleX(0.9770)">;WIDTH:0.659241</span>
<span class="n" style="left:7.3px;top:293.2px;transform:scaleX(0.9900)">42898</span>
<span class="g" style="left:51.6px;top:293.2px;transform:scaleX(0.8588)">G1</span>
<span style="left:72.4px;top:293.2px;transform:scaleX(1.0028)">F8400</span>
<span class="n" style="left:7.3px;top:312.2px;transform:scaleX(0.9900)">42899</span>
<span class="g" style="left:51.6px;top:312.2px;transform:scaleX(0.8588)">G1</span>
<span style="left:72.4px;top:312.2px;transform:scaleX(0.9780)">X72.671 Y107.024 E.07037</span>
<span class="n" style="left:7.3px;top:331.2px;transform:scaleX(0.9900)">42900</span>
<span class="c" style="left:51.2px;top:331.2px;transform:scaleX(0.9770)">;WIDTH:0.657191</span>
<span class="n" style="left:7.3px;top:350.2px;transform:scaleX(0.9900)">42901</span>
<span class="g" style="left:51.6px;top:350.2px;transform:scaleX(0.8588)">G1</span>
<span style="left:72.4px;top:350.2px;transform:scaleX(0.9749)">X72.671 Y137.531 E2.73795</span>
<span class="n" style="left:7.3px;top:369.2px;transform:scaleX(0.9900)">42902</span>
<span class="g" style="left:51.6px;top:369.2px;transform:scaleX(0.8588)">G1</span>
<span style="left:72.4px;top:369.2px;transform:scaleX(0.9780)">X72.644 Y137.801 E.02443</span>
<span class="n" style="left:7.3px;top:388.2px;transform:scaleX(0.9900)">42903</span>
<span class="g" style="left:51.6px;top:388.2px;transform:scaleX(0.8588)">G1</span>
<span style="left:72.4px;top:388.2px;transform:scaleX(0.9780)">X72.248 Y137.825 E.03557</span>
<span class="n" style="left:7.3px;top:407.2px;transform:scaleX(0.9900)">42904</span>
<span class="c" style="left:51.2px;top:407.2px;transform:scaleX(1.0495)">; stop printing object simple-card-deck-box-lid.stl ...</span>
<span class="n" style="left:7.3px;top:426.2px;transform:scaleX(0.9900)">42905</span>
<span class="g" style="left:51.6px;top:426.2px;transform:scaleX(0.8588)">G1</span>
<span style="left:72.4px;top:426.2px;transform:scaleX(0.9944)">E-.28 F2400</span>
<span class="n" style="left:7.3px;top:445.2px;transform:scaleX(0.9900)">42906</span>
<span class="c" style="left:51.2px;top:445.2px;transform:scaleX(0.9059)">;WIPE_START</span>
<span class="n" style="left:7.3px;top:464.2px;transform:scaleX(0.9900)">42907</span>
<span class="g" style="left:51.6px;top:464.2px;transform:scaleX(0.8588)">G1</span>
<span style="left:72.4px;top:464.2px;transform:scaleX(1.0028)">F8400</span>
<span class="n" style="left:7.3px;top:483.2px;transform:scaleX(0.9900)">42908</span>
<span class="g" style="left:51.6px;top:483.2px;transform:scaleX(0.8588)">G1</span>
<span style="left:72.4px;top:483.2px;transform:scaleX(0.9890)">X72.079 Y137.735 E-.02298</span>
</div>
<div class="sl"><span>1</span></div>
</body></html>
